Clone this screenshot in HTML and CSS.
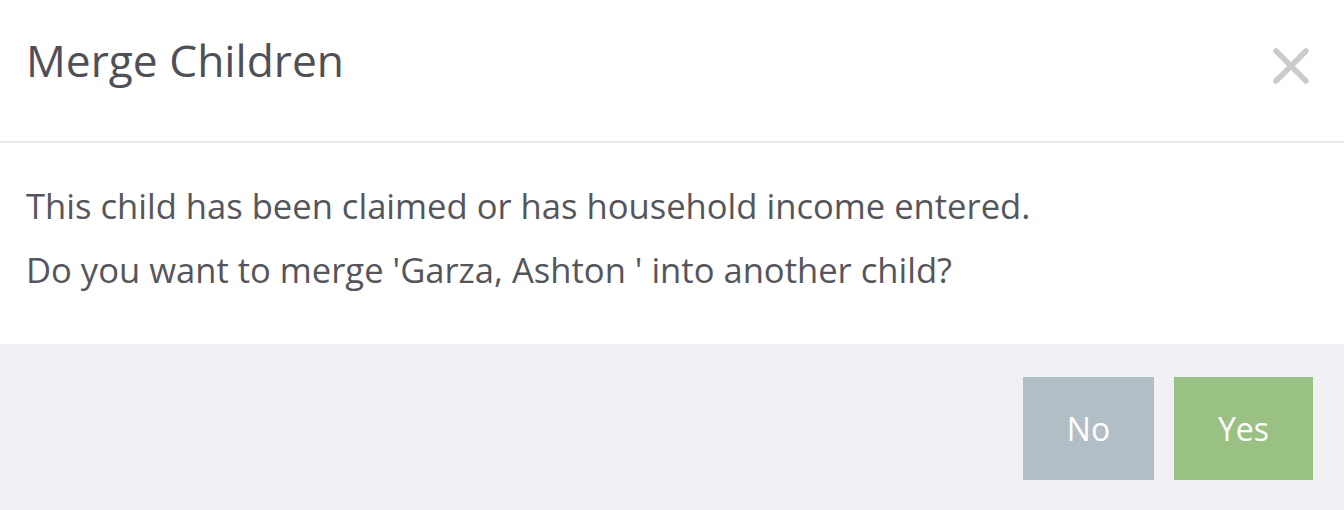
FILE: index.html
```html
<!DOCTYPE html>
<html>
<head>
<meta charset="utf-8">
<link rel="stylesheet" href="styles.css">
</head>
<body>
<div class="modal">
  <div class="modal-header">
    <h4 class="modal-title">Merge Children</h4>
    <button class="close" aria-label="Close">
      <svg width="36" height="36" viewBox="0 0 36 36"><path d="M3 3 L33 33 M33 3 L3 33" stroke="#cbcbcb" stroke-width="5.5" stroke-linecap="round"/></svg>
    </button>
  </div>
  <div class="modal-body">
    <p>This child has been claimed or has household income entered.</p>
    <p>Do you want to merge 'Garza, Ashton ' into another child?</p>
  </div>
  <div class="modal-footer">
    <button class="btn btn-no">No</button>
    <button class="btn btn-yes">Yes</button>
  </div>
</div>
</body>
</html>
```
FILE: styles.css
```css
html, body {
  margin: 0;
  padding: 0;
  background: #ffffff;
}
body {
  font-family: "Open Sans", "Noto Sans", sans-serif;
  width: 1344px;
  height: 510px;
  overflow: hidden;
}
.modal {
  display: flex;
  flex-direction: column;
  height: 510px;
}
.modal-header {
  height: 141px;
  border-bottom: 2px solid #e8e8e8;
  display: flex;
  align-items: center;
  justify-content: space-between;
  padding: 0 35px 0 26px;
  box-sizing: content-box;
}
.modal-title {
  margin: 0;
  font-weight: 400;
  font-size: 44.3px;
  color: #4f4f57;
  margin-top: -21px;
}
.close {
  border: 0;
  background: none;
  padding: 0;
  width: 36px;
  height: 36px;
  display: flex;
  margin-top: -9px;
}
.modal-body {
  padding: 31px 26px 42px;
  font-size: 34.6px;
  line-height: 64px;
  color: #55555c;
}
.modal-body p {
  margin: 0;
}
.modal-footer {
  flex: 1;
  background: #f1f1f5;
  display: flex;
  justify-content: flex-end;
  align-items: flex-start;
  gap: 20px;
  padding: 33px 31px 0;
}
.btn {
  border: 0;
  height: 103px;
  color: #ffffff;
  font-family: "Open Sans", "Noto Sans", sans-serif;
  font-size: 32px;
  padding: 0;
}
.btn-no {
  width: 131px;
  background: #b2bec6;
}
.btn-yes {
  width: 139px;
  background: #9ac184;
}
```
